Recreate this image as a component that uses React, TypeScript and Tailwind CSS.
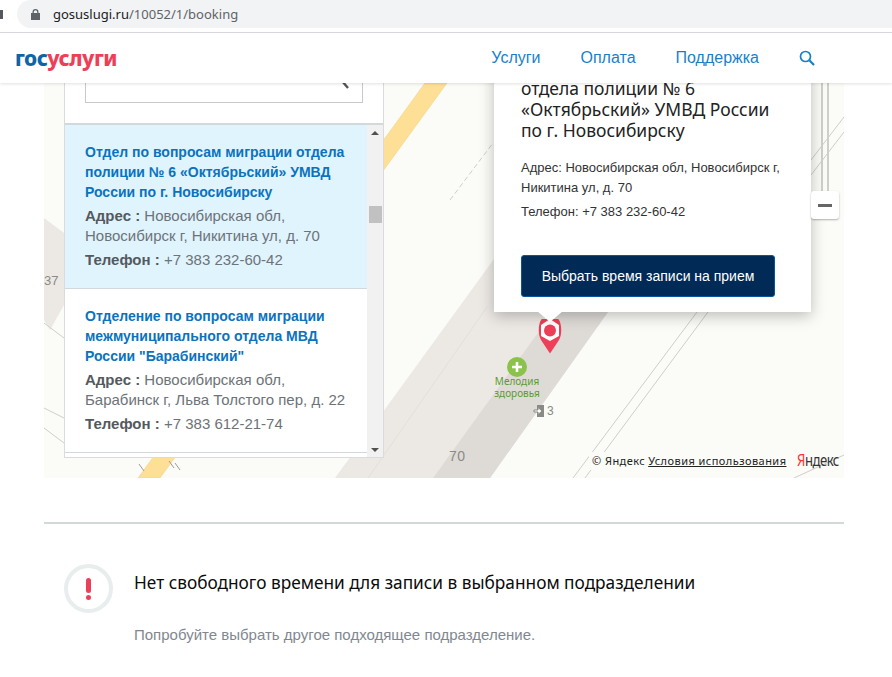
import React from "react";

const arial = "font-['Liberation_Sans',Arial,sans-serif]";
const noto = "font-['Noto_Sans',sans-serif]";

function MapArt() {
  return (
    <svg className="absolute inset-0" width="800" height="395" viewBox="0 0 800 395" fill="none">
      {/* coordinates relative to the map: page x-44, y-83 */}
      <polygon points="291,395 450,176 560,100 564,229 446,395" fill="#ece9e5" />
      <polygon points="389,395 446,395 564,229 509,229" fill="#dedbd7" />
      <polygon points="0,135 20,150 20,222 6,247 0,237" fill="#ece9e5" />
      <polygon points="381,0 403,0 116,395 94,395" fill="#fddf95" stroke="#f3cf7e" strokeWidth="0.5" />
      <g stroke="#cfcfc9" strokeWidth="1">
        <line x1="324" y1="395" x2="443" y2="224" stroke="#e2dfdb" />
        <line x1="529" y1="395" x2="653" y2="229" />
        <line x1="541" y1="395" x2="664" y2="229" />
        <line x1="778" y1="0" x2="778" y2="108" strokeWidth="2" />
        <line x1="784" y1="0" x2="784" y2="108" strokeWidth="2" />
        <line x1="767" y1="77" x2="800" y2="34" />
        <line x1="767" y1="92" x2="800" y2="49" />
        <line x1="0" y1="240" x2="20" y2="255" />
        <line x1="0" y1="345" x2="20" y2="360" />
        <line x1="0" y1="325" x2="20" y2="335" />
        <line x1="406" y1="117" x2="449" y2="60" strokeDasharray="5 3" />
        <line x1="750" y1="395" x2="800" y2="372" />
      </g>
      <g stroke="#9d9d97" strokeWidth="1">
        <line x1="95" y1="381" x2="100" y2="388" />
        <line x1="125" y1="378" x2="130" y2="385" />
        <line x1="131" y1="380" x2="136" y2="387" />
      </g>
    </svg>
  );
}

function Place({ title, l1, l2, phone, active }: { title: string[]; l1: string; l2: string; phone: string; active?: boolean }) {
  return (
    <div className={`px-5 pt-[17px] pb-[18px] border-b border-[#d5d8da] ${active ? "bg-[#e0f4fe]" : "bg-white"}`}>
      <div className="text-[14px] leading-[20px] font-bold text-[#0b73bd] whitespace-nowrap">
        {title.map((t) => (
          <div key={t}>{t}</div>
        ))}
      </div>
      <div className="mt-[4px] text-[15px] leading-[20px] text-[#6d7378] whitespace-nowrap">
        <div>
          <b className="text-[#54595e]">Адрес :</b> {l1}
        </div>
        <div>{l2}</div>
        <div className="mt-[4px]">
          <b className="text-[#54595e]">Телефон :</b> {phone}
        </div>
      </div>
    </div>
  );
}

export default function App() {
  return (
    <div className={`relative w-[892px] h-[677px] overflow-hidden bg-white ${arial}`}>
      {/* browser address bar */}
      <div className="h-[33px] flex items-start border-b border-[#dadce0] bg-white">
        <div className="mt-[10px] w-[3px] h-[9px] bg-[#55585c] shrink-0" />
        <div className="ml-[14px] w-full h-[28px] rounded-l-[14px] bg-[#f1f3f4] flex items-center pl-[14px]">
          <svg width="9" height="11" viewBox="0 0 9 11" fill="#5f6368">
            <path d="M1.5 4V3a3 3 0 0 1 6 0v1H9v7H0V4Zm1.3 0h3.4V3a1.7 1.7 0 0 0-3.4 0Z" />
          </svg>
          <span className={`ml-[13px] text-[13px] leading-[28px] text-[#5f6368] ${noto}`}>
            <span className="text-[#202124]">gosuslugi.ru</span>/10052/1/booking
          </span>
        </div>
      </div>

      {/* site header */}
      <header className="relative z-20 h-[50px] flex items-center bg-white shadow-[0_1px_3px_rgba(0,0,0,0.12)]">
        <div className={`ml-[15px] text-[21px] leading-[24px] font-extrabold tracking-[-0.5px] ${noto}`}>
          <span className="text-[#0d65a8]">гос</span>
          <span className="text-[#ee3f58]">услуги</span>
        </div>
        <nav className="ml-auto flex items-center gap-[40px] text-[16px] text-[#1a7fc9]">
          <span>Услуги</span>
          <span>Оплата</span>
          <span>Поддержка</span>
        </nav>
        <svg className="ml-[40px] mr-[77px]" width="16" height="16" viewBox="0 0 16 16" fill="none" stroke="#1a7fc9" strokeWidth="1.7">
          <circle cx="6.5" cy="6.5" r="5" />
          <path d="M10.3 10.3 15 15" strokeWidth="2.2" />
        </svg>
      </header>

      <main className="pl-[44px] pr-[48px]">
        {/* map */}
        <section className="relative h-[395px] bg-[#fbfbf7] overflow-hidden">
          <MapArt />

          <span className="absolute left-0 top-[188px] text-[13px] text-[#8a8a86]">37</span>
          <span className="absolute left-[405px] top-[363px] text-[14px] text-[#8a8a86] tracking-[0.5px]">70</span>

          {/* list panel */}
          <div className="absolute left-[20px] -top-[20px] w-[320px] h-[395px] bg-white border border-[#d9dbdc] flex flex-col">
            <div className="h-[59px] px-[20px] shrink-0">
              <div className="relative h-[39px] border border-[#c9c9c9]">
                <svg className="absolute right-[12px] top-[15px]" width="10" height="10" viewBox="0 0 10 10" stroke="#555" strokeWidth="2.4">
                  <path d="M2 1 8 8" />
                </svg>
              </div>
            </div>
            <div className="border-t-2 border-[#d5d8da] flex flex-1 min-h-0">
              <div className="w-[302px] overflow-hidden">
                <Place active title={["Отдел по вопросам миграции отдела", "полиции № 6 «Октябрьский» УМВД", "России по г. Новосибирску"]} l1="Новосибирская обл," l2="Новосибирск г, Никитина ул, д. 70" phone="+7 383 232-60-42" />
                <Place title={["Отделение по вопросам миграции", "межмуниципального отдела МВД", 'России "Барабинский"']} l1="Новосибирская обл," l2="Барабинск г, Льва Толстого пер, д. 22" phone="+7 383 612-21-74" />
              </div>
              <div className="relative flex-1 bg-[#f1f1f1]">
                <div className="absolute top-[6px] left-[4px] w-0 h-0 border-x-[4px] border-x-transparent border-b-[4px] border-b-[#505050]" />
                <div className="absolute top-[81px] left-[2px] w-[13px] h-[17px] bg-[#c1c1c1]" />
                <div className="absolute bottom-[5px] left-[4px] w-0 h-0 border-x-[4px] border-x-transparent border-t-[4px] border-t-[#505050]" />
              </div>
            </div>
          </div>

          {/* pin */}
          <svg className="absolute left-[494px] top-[236px]" width="24" height="35" viewBox="0 0 24 35">
            <path d="M12 34.5 3 21C-1 14 1 2 4 0h16c3 2 5 14 1 21Z" fill="#ee3f58" />
            <polygon points="12,0 21,6 21,17 12,22 3,17 3,6" fill="#fff" />
            <circle cx="12" cy="11.5" r="6" fill="#ee3f58" />
          </svg>

          {/* balloon */}
          <div className="absolute left-[450px] -top-[20px] w-[317px] h-[249px] bg-white shadow-[0_4px_14px_rgba(0,0,0,0.25)] px-[27px]">
            <div className={`pt-[15px] text-[17.5px] leading-[21px] text-[#222] whitespace-nowrap ${noto}`}>
              <div>отдела полиции № 6</div>
              <div>«Октябрьский» УМВД России</div>
              <div>по г. Новосибирску</div>
            </div>
            <div className="mt-[17px] text-[13px] leading-[20px] text-[#333] whitespace-nowrap">
              <div>Адрес: Новосибирская обл, Новосибирск г,</div>
              <div>Никитина ул, д. 70</div>
              <div className="mt-[4px]">Телефон: +7 383 232-60-42</div>
            </div>
            <button className="mt-[33px] w-[254px] h-[42px] rounded-[3px] bg-[#012a56] border border-[#0c5596] text-white text-[14px]">
              Выбрать время записи на прием
            </button>
            <div className="absolute left-[43px] -bottom-[10px] w-0 h-0 border-x-[13px] border-x-transparent border-t-[11px] border-t-white" />
          </div>

          {/* poi */}
          <div className="absolute left-[463px] top-[274px] w-[20px] h-[20px] rounded-full bg-[#8bc34a] flex items-center justify-center">
            <svg width="10" height="10" viewBox="0 0 10 10" fill="none" stroke="#fff" strokeWidth="2.6">
              <path d="M5 0v10M0 5h10" />
            </svg>
          </div>
          <div className={`absolute left-[440px] top-[293px] w-[66px] text-center text-[10px] leading-[11.5px] text-[#5d9a32] ${noto}`}>
            Мелодия
            <br />
            здоровья
          </div>
          <div className="absolute left-[489px] top-[321px] flex items-center text-[12px] leading-[14px] text-[#8a8a86]">
            <svg width="12" height="12" viewBox="0 0 12 12">
              <rect x="4" y="0" width="7" height="12" fill="#8a8a86" />
              <polygon points="1,5 5,5 5,2.5 9,6 5,9.5 5,7 1,7" fill="#fff" stroke="#8a8a86" strokeWidth="1" />
            </svg>
            <span className="ml-[2px]">3</span>
          </div>

          {/* zoom out */}
          <div className="absolute left-[767px] top-[108px] w-[28px] h-[28px] rounded-[3px] bg-white shadow-[0_1px_2px_rgba(0,0,0,0.3)] flex items-center justify-center">
            <div className="w-[14px] h-[3px] bg-[#666]" />
          </div>

          {/* copyright */}
          <div className={`absolute left-[545px] top-[369px] h-[18px] px-[3px] bg-[#fbfbf7] flex items-center gap-[3px] text-[11px] text-[#222] tracking-[0.45px] whitespace-nowrap ${noto}`}>
            <span>© Яндекс</span>
            <span className="underline">Условия использования</span>
          </div>
          <div className={`absolute left-[753px] top-[367px] text-[16px] leading-[20px] tracking-[-0.6px] text-[#333] scale-x-[0.82] origin-left whitespace-nowrap ${noto}`}>
            <span className="text-[#f33]">Я</span>ндекс
          </div>
        </section>

        {/* divider */}
        <div className="mt-[44px] h-[2px] bg-[#d3d8da]" />

        {/* notice */}
        <section className="pl-[20px] pt-[40px] flex gap-[21px]">
          <div className="w-[49px] h-[49px] shrink-0 rounded-full border-[4px] border-[#e8eded] flex flex-col items-center justify-center gap-[2px]">
            <div className="w-[5px] h-[15px] rounded-full bg-[#ee3f58]" />
            <div className="w-[5px] h-[5px] rounded-full bg-[#ee3f58]" />
          </div>
          <div>
            <div className={`text-[17.25px] leading-[24px] mt-[7px] text-[#0b0b0b] whitespace-nowrap ${noto}`}>
              Нет свободного времени для записи в выбранном подразделении
            </div>
            <div className="mt-[30px] text-[15px] leading-[20px] text-[#7f8890]">
              Попробуйте выбрать другое подходящее подразделение.
            </div>
          </div>
        </section>
      </main>
    </div>
  );
}
